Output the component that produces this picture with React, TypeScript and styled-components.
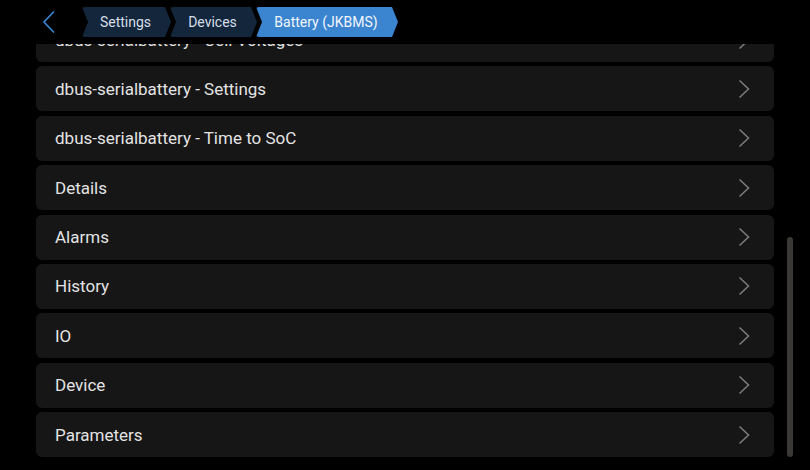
import React from "react";
import styled, { createGlobalStyle } from "styled-components";

const Global = createGlobalStyle`
  html, body { margin: 0; padding: 0; background: #000; }
  body { width: 810px; height: 470px; overflow: hidden; font-family: Roboto, "Noto Sans", sans-serif; }
  #root { width: 810px; height: 470px; }
`;

const Page = styled.div`
  position: relative;
  width: 810px;
  height: 470px;
  background: #000;
  display: flex;
  flex-direction: column;
  overflow: hidden;
`;

const Header = styled.header`
  position: relative;
  z-index: 2;
  height: 44px;
  flex: none;
  background: #000;
  display: flex;
  align-items: flex-start;
  padding-top: 7px;
  box-sizing: border-box;
`;

const BackButton = styled.button`
  width: 26px;
  height: 30px;
  margin-left: 36px;
  margin-right: 20px;
  padding: 0;
  border: none;
  background: transparent;
  display: flex;
  align-items: center;
  justify-content: center;
`;

const Crumbs = styled.nav`
  display: flex;
`;

const Crumb = styled.div<{ $active?: boolean; $w: number }>`
  width: ${(p) => p.$w}px;
  height: 30px;
  margin-right: -1px;
  display: flex;
  align-items: center;
  justify-content: center;
  padding-right: 2px;
  box-sizing: border-box;
  background: ${(p) => (p.$active ? "#3a84d0" : "#13263c")};
  color: ${(p) => (p.$active ? "#f2f6fa" : "#d6dee8")};
  font-size: 14px;
  clip-path: polygon(0 0, calc(100% - 6px) 0, 100% 50%, calc(100% - 6px) 100%, 0 100%, 6px 50%);
  border-radius: 3px;
`;

const ListArea = styled.div`
  position: relative;
  flex: 1;
  overflow: hidden;
`;

const List = styled.ul`
  list-style: none;
  margin: -27px 0 0 0;
  padding: 0 36px;
  display: flex;
  flex-direction: column;
  gap: 4.375px;
`;

const Row = styled.li`
  height: 45px;
  flex: none;
  border-radius: 6px;
  background: #161616;
  display: flex;
  align-items: center;
  justify-content: space-between;
  padding: 0 24px 0 19px;
  color: #e3e3e3;
  font-size: 17px;
`;

const ScrollThumb = styled.div`
  position: absolute;
  left: 787px;
  top: 193px;
  width: 6px;
  height: 220px;
  border-radius: 3px;
  background: #3a3935;
`;

const Chevron = () => (
  <svg width="12" height="20" viewBox="0 0 12 20">
    <path d="M1.5 1.5 L10.5 10 L1.5 18.5" fill="none" stroke="#7a7a7a" strokeWidth="1.6" />
  </svg>
);

const items = [
  "dbus-serialbattery - Cell Voltages",
  "dbus-serialbattery - Settings",
  "dbus-serialbattery - Time to SoC",
  "Details",
  "Alarms",
  "History",
  "IO",
  "Device",
  "Parameters",
];

export default function App() {
  return (
    <>
      <Global />
      <Page>
        <Header>
          <BackButton aria-label="Back">
            <svg width="14" height="24" viewBox="0 0 14 24">
              <path d="M12 1.5 L2 12 L12 22.5" fill="none" stroke="#3a84d0" strokeWidth="1.7" />
            </svg>
          </BackButton>
          <Crumbs>
            <Crumb $w={89}>Settings</Crumb>
            <Crumb $w={87}>Devices</Crumb>
            <Crumb $w={142} $active>Battery (JKBMS)</Crumb>
          </Crumbs>
        </Header>
        <ListArea>
          <List>
            {items.map((t) => (
              <Row key={t}>
                <span>{t}</span>
                <Chevron />
              </Row>
            ))}
          </List>
          <ScrollThumb />
        </ListArea>
      </Page>
    </>
  );
}
